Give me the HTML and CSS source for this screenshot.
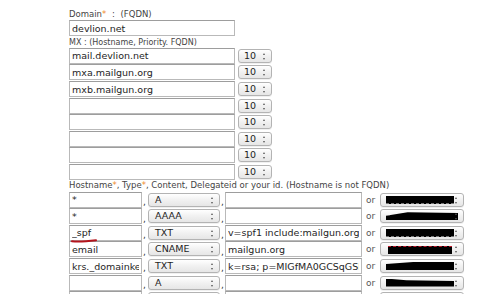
FILE: index.html
```html
<!DOCTYPE html>
<html lang="en">
<head>
    <meta charset="UTF-8">
    <title>DNS zone</title>
    <link rel="stylesheet" href="styles.css">
</head>
<body>
    <form class="zone">
        <div class="lbl big spaced">Domain<span class="req">*</span> : (FQDN)</div>
        <div class="row"><input class="field domain" value="devlion.net"></div>

        <div class="lbl">MX : (Hostname, Priority. FQDN)</div>
        <div class="row"><input class="field mx-host" value="mail.devlion.net"><div class="sel prio">10<i class="arr"></i></div></div>
        <div class="row"><input class="field mx-host" value="mxa.mailgun.org"><div class="sel prio">10<i class="arr"></i></div></div>
        <div class="row"><input class="field mx-host" value="mxb.mailgun.org"><div class="sel prio">10<i class="arr"></i></div></div>
        <div class="row"><input class="field mx-host" value=""><div class="sel prio">10<i class="arr"></i></div></div>
        <div class="row"><input class="field mx-host" value=""><div class="sel prio">10<i class="arr"></i></div></div>
        <div class="row"><input class="field mx-host" value=""><div class="sel prio">10<i class="arr"></i></div></div>
        <div class="row"><input class="field mx-host" value=""><div class="sel prio">10<i class="arr"></i></div></div>
        <div class="row"><input class="field mx-host" value=""><div class="sel prio">10<i class="arr"></i></div></div>

        <div class="lbl big">Hostname<span class="req">*</span>, Type<span class="req">*</span>, Content, Delegateid or your id. (Hostname is not FQDN)</div>
        <div class="row">
            <input class="field rec-host" value="*"><span class="sep">,</span>
            <div class="sel rec-type">A<i class="arr"></i></div><span class="sep">,</span>
            <input class="field rec-content" value="">
            <span class="or">or</span>
            <div class="sel rec-id"><span class="redact r1"></span><i class="arr"></i></div>
        </div>
        <div class="row">
            <input class="field rec-host" value="*"><span class="sep">,</span>
            <div class="sel rec-type">AAAA<i class="arr"></i></div><span class="sep">,</span>
            <input class="field rec-content" value="">
            <span class="or">or</span>
            <div class="sel rec-id"><span class="redact r2"></span><i class="arr"></i></div>
        </div>
        <div class="row">
            <div class="host-wrap">
                <input class="field rec-host" value="_spf">
                <svg class="mark" width="28" height="5" viewBox="0 0 28 5"><path d="M2 3.2 C 8 3.8, 16 3.4, 26 2.2" stroke="#b3141c" stroke-width="2" fill="none" stroke-linecap="round"/></svg>
            </div><span class="sep">,</span>
            <div class="sel rec-type">TXT<i class="arr"></i></div><span class="sep">,</span>
            <input class="field rec-content" value="v=spf1 include:mailgun.org -all">
            <span class="or">or</span>
            <div class="sel rec-id"><span class="redact r1"></span><i class="arr"></i></div>
        </div>
        <div class="row">
            <input class="field rec-host" value="email"><span class="sep">,</span>
            <div class="sel rec-type">CNAME<i class="arr"></i></div><span class="sep">,</span>
            <input class="field rec-content" value="mailgun.org">
            <span class="or">or</span>
            <div class="sel rec-id"><span class="redact r4"></span><i class="arr"></i></div>
        </div>
        <div class="row">
            <input class="field rec-host" value="krs._domainkey"><span class="sep">,</span>
            <div class="sel rec-type">TXT<i class="arr"></i></div><span class="sep">,</span>
            <input class="field rec-content" value="k=rsa; p=MIGfMA0GCSqGSIb3DQEB">
            <span class="or">or</span>
            <div class="sel rec-id"><span class="redact r5"></span><i class="arr"></i></div>
        </div>
        <div class="row">
            <input class="field rec-host" value=""><span class="sep">,</span>
            <div class="sel rec-type">A<i class="arr"></i></div><span class="sep">,</span>
            <input class="field rec-content" value="">
            <span class="or">or</span>
            <div class="sel rec-id"><span class="redact r6"></span><i class="arr"></i></div>
        </div>
        <div class="row">
            <input class="field rec-host" value=""><span class="sep"></span>
            <div class="sel rec-type"><i class="arr"></i></div><span class="sep"></span>
            <input class="field rec-content" value="">
            <span class="or"></span>
            <div class="sel rec-id"><i class="arr"></i></div>
        </div>
    </form>
</body>
</html>
```

FILE: styles.css
```css
body {
    margin: 0;
    background-color: #fff;
    font-family: "DejaVu Sans", Verdana, sans-serif;
    overflow: hidden;
}
.zone {
    padding: 9px 0 0 69px;
}
.lbl {
    height: 11px;
    line-height: 11px;
    font-size: 8px;
    color: #444;
    white-space: nowrap;
}
.lbl.big {
    font-size: 8.5px;
}
.lbl.spaced {
    word-spacing: 3px;
}
.req {
    color: #f08c2a;
}
.row {
    display: flex;
    align-items: center;
    height: 16.6px;
}
.field {
    box-sizing: border-box;
    height: 16px;
    margin: 0;
    padding: 0 2px;
    border: 1px solid #b9b9b9;
    border-top-color: #9d9d9d;
    background: #fff;
    font-family: "DejaVu Sans", Verdana, sans-serif;
    font-size: 9.5px;
    color: #1e1e1e;
    outline: none;
}
.domain,
.mx-host {
    width: 166px;
}
.rec-host {
    width: 73px;
}
.rec-content {
    width: 137px;
}
.host-wrap {
    position: relative;
    display: flex;
}
.mark {
    position: absolute;
    left: 1px;
    top: 13px;
}
.sep {
    width: 6px;
    font-size: 9px;
    color: #333;
    align-self: flex-end;
    line-height: 12px;
    padding-left: 1px;
    box-sizing: border-box;
}
.rec-type + .sep {
    width: 5px;
}
.sel {
    position: relative;
    box-sizing: border-box;
    height: 14px;
    line-height: 12px;
    padding-left: 6px;
    border: 1px solid #b3b3b3;
    border-radius: 3px;
    background: linear-gradient(#ffffff, #f1f1f1 50%, #e6e6e6);
    box-shadow: 0 1px 0 rgba(0, 0, 0, 0.06);
    font-size: 9.5px;
    color: #1e1e1e;
    overflow: hidden;
}
.prio {
    width: 34px;
    margin-left: 3px;
    padding-left: 5px;
}
.rec-type {
    width: 72px;
}
.rec-id {
    width: 84px;
}
.or {
    width: 18px;
    padding-left: 4px;
    box-sizing: border-box;
    font-size: 9px;
    color: #555;
}
/* the up/down arrows of a mac select */
.arr {
    position: absolute;
    right: 4px;
    top: 3px;
    width: 5px;
    height: 7px;
}
.arr::before,
.arr::after {
    content: "";
    position: absolute;
    left: 1px;
    border-left: 1.5px solid transparent;
    border-right: 1.5px solid transparent;
}
.arr::before {
    top: 0;
    border-bottom: 2.5px solid #555;
}
.arr::after {
    bottom: 0;
    border-top: 2.5px solid #555;
}
/* blacked out ids */
.redact {
    position: absolute;
    left: 5px;
    top: 2px;
    height: 8px;
    background: #000;
}
.r1 {
    width: 68px;
    border-bottom: 1px dashed #777;
    height: 7px;
}
.r2 {
    width: 72px;
    clip-path: polygon(0 45%, 30% 0, 100% 10%, 100% 100%, 0 100%);
}
.r4 {
    left: 7px;
    width: 64px;
    top: 3px;
    height: 7px;
    border-top: 1px dashed #c0182a;
}
.r5 {
    width: 68px;
    clip-path: polygon(0 25%, 40% 0, 100% 0, 100% 100%, 0 100%);
}
.r6 {
    width: 68px;
    clip-path: polygon(0 0, 30% 20%, 100% 30%, 100% 100%, 0 100%);
}
```
